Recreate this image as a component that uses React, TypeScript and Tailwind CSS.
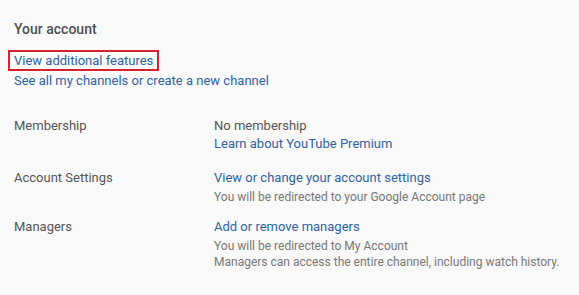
import React from 'react';

const Row: React.FC<{ label: string; className?: string; children: React.ReactNode }> = ({ label, className, children }) => (
  <div className={`flex ${className ?? ''}`}>
    <div className="w-[200px] shrink-0 text-[13px] leading-[18px] text-[#555]">{label}</div>
    <div className="flex flex-col">{children}</div>
  </div>
);

export default function App() {
  return (
    <div
      className="w-[579px] h-[295px] bg-[#f9f9f9] pl-[14px] pt-[19px]"
      style={{ fontFamily: 'Roboto, "Liberation Sans", sans-serif' }}
    >
      <h2 className="text-[14px] leading-[20px] font-medium text-[#505050]">Your account</h2>

      <div className="mt-[11px] flex flex-col items-start">
        <a className="-ml-[6px] px-[4px] border-2 border-[#d3232f] text-[13px] leading-[17px] text-[#2f62a3]">
          View additional features
        </a>
        <a className="text-[13px] leading-[19px] text-[#2f62a3]">See all my channels or create a new channel</a>
      </div>

      <div className="mt-[27px] flex flex-col">
        <Row label="Membership">
          <span className="text-[13px] leading-[18px] text-[#555]">No membership</span>
          <a className="text-[13px] leading-[18px] text-[#2f62a3]">Learn about YouTube Premium</a>
        </Row>
        <Row label="Account Settings" className="mt-[16px]">
          <a className="text-[13px] leading-[18px] text-[#2f62a3]">View or change your account settings</a>
          <span className="mt-[2px] text-[12px] leading-[16px] text-[#777]">You will be redirected to your Google Account page</span>
        </Row>
        <Row label="Managers" className="mt-[13px]">
          <a className="text-[13px] leading-[18px] text-[#2f62a3]">Add or remove managers</a>
          <span className="mt-[2px] text-[12px] leading-[16px] text-[#777]">You will be redirected to My Account</span>
          <span className="text-[12px] leading-[16px] text-[#777]">
            Managers can access the entire channel, including watch history.
          </span>
        </Row>
      </div>
    </div>
  );
}
